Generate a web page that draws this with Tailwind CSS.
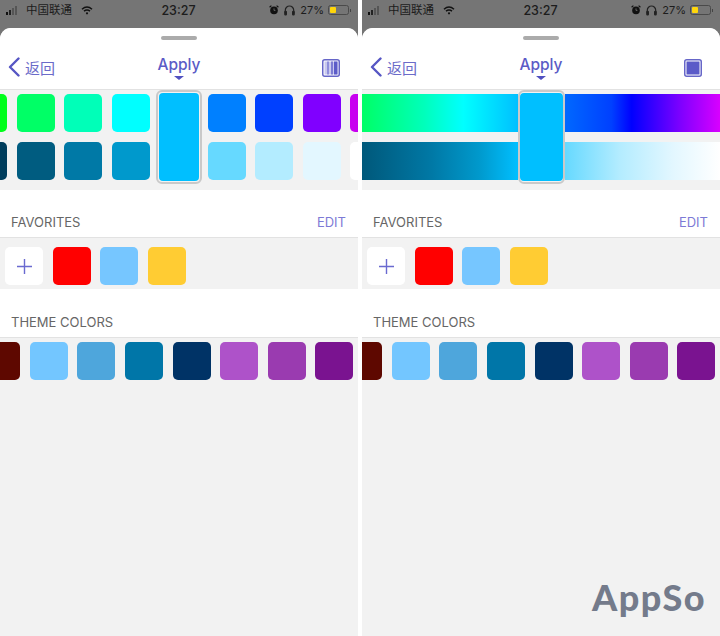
<!DOCTYPE html>
<html><head><meta charset="utf-8"><script src="https://cdn.jsdelivr.net/npm/@tailwindcss/browser@4"></script></head>
<body class="m-0">
<div class="relative flex justify-between w-[720px] h-[636px] overflow-hidden bg-white font-['Inter','Noto_Sans_CJK_SC',sans-serif]">

<!-- LEFT -->
<section class="w-[358px] h-full flex flex-col bg-[#757575] overflow-hidden">
  <div class="h-[28px] shrink-0 flex items-center pl-[6px] pr-[7px] pb-[8px] text-[#1c1c1c]">
    <div class="flex-1 flex items-center">
      <div class="flex items-end gap-[1px] w-[15px] h-[9px]"><i class="block w-[2px] h-[3px] bg-[#111]"></i><i class="block w-[2px] h-[5px] bg-[#222]"></i><i class="block w-[2px] h-[7px] bg-[#555]"></i><i class="block w-[2px] h-[9px] bg-[#555]"></i></div>
      <span class="ml-[5px] text-[11.5px] leading-none font-['Noto_Sans_CJK_SC',sans-serif]">中国联通</span>
      <svg class="ml-[9px]" width="12" height="9" viewBox="0 0 12 9" fill="none" stroke="#111"><path d="M1 3.2C4 .6 8 .6 11 3.2" stroke-width="1.5"/><path d="M3 5.2c1.8-1.5 4.2-1.5 6 0" stroke-width="1.5"/><circle cx="6" cy="7.3" r="1.1" fill="#111" stroke="none"/></svg>
    </div>
    <span class="relative top-[1px] text-[12.5px] font-medium leading-none">23:27</span>
    <div class="flex-1 flex items-center justify-end">
      <svg width="10" height="10" viewBox="0 0 10 10"><circle cx="5" cy="5.4" r="3.8" fill="#111"/><path d="M.6 2.2 2.4.6M9.4 2.2 7.6.6" stroke="#111" stroke-width="1.2"/><path d="M5 3.4v2h1.4" stroke="#777" stroke-width=".8" fill="none"/></svg>
      <svg class="ml-[5px]" width="11" height="11" viewBox="0 0 11 11" fill="none" stroke="#222" stroke-width="1.2"><path d="M1.3 8V5.2a4.2 4.2 0 0 1 8.4 0V8"/><rect x=".8" y="6.4" width="1.6" height="3.4" rx=".6" fill="#222"/><rect x="8.6" y="6.4" width="1.6" height="3.4" rx=".6" fill="#222"/></svg>
      <span class="ml-[5px] text-[11px] leading-none">27%</span>
      <div class="ml-[4px] flex items-center">
        <div class="w-[21px] h-[10px] rounded-[2.5px] border border-[#4a4a4a] p-[1px]"><div class="w-[6px] h-full bg-[#ffd60a] rounded-[1px]"></div></div>
        <i class="block w-[1px] h-[3px] bg-[#444] ml-[1px]"></i>
      </div>
    </div>
  </div>

  <div class="flex-1 flex flex-col bg-[#f2f2f2] rounded-t-[11px] overflow-hidden">
    <div class="h-[62px] shrink-0 bg-white border-b border-[#e2e2e2] flex flex-col">
      <div class="w-[36px] h-[4px] mt-[8px] rounded-full bg-[#ababab] mx-auto"></div>
      <div class="grid grid-cols-[1fr_auto_1fr] items-start px-[8px] mt-[15px]">
        <div class="flex items-center h-[24px]">
          <svg width="12" height="20" viewBox="0 0 12 20" fill="none" stroke="#5656c4" stroke-width="2.4" stroke-linecap="round" stroke-linejoin="round"><path d="M10.5 1.5 2 10l8.5 8.5"/></svg>
          <span class="ml-[5px] text-[15px] leading-none font-['Noto_Sans_CJK_SC',sans-serif] text-[#6b6bc9]">返回</span>
        </div>
        <div class="flex flex-col items-center">
          <span class="text-[15.5px] leading-[20px] font-medium text-[#5b5bc6]">Apply</span>
          <i class="block mt-[1px] w-0 h-0 border-x-[5px] border-x-transparent border-t-[4px] border-t-[#5050c0]"></i>
        </div>
        <div class="flex justify-end pr-[10px] mt-[4px]">
          <svg width="18" height="18" viewBox="0 0 18 18"><rect x=".75" y=".75" width="16.5" height="16.5" rx="2" fill="#fff" stroke="#6666c8" stroke-width="1.5"/><rect x="2.5" y="2.5" width="13" height="13" fill="#c9c9ee"/><rect x="5" y="2.5" width="2" height="13" fill="#8f8fdc"/><rect x="9" y="2.5" width="2" height="13" fill="#7c7cd4"/><rect x="12" y="2.5" width="3.5" height="13" fill="#5c5cc8"/></svg>
        </div>
      </div>
    </div>

    <div class="h-[100px] shrink-0 pt-[4px] overflow-hidden">
      <div class="grid grid-rows-[38px_38px] grid-flow-col auto-cols-max gap-y-[10px] gap-x-[9.5px] ml-[-31px]">
        <div class="w-[38px] rounded-[5px] bg-[#00ff1a]"></div><div class="w-[38px] rounded-[5px] bg-[#003d5c]"></div>
        <div class="w-[38px] rounded-[5px] bg-[#00ff66]"></div><div class="w-[38px] rounded-[5px] bg-[#005c80]"></div>
        <div class="w-[38px] rounded-[5px] bg-[#00ffb8]"></div><div class="w-[38px] rounded-[5px] bg-[#0079a6]"></div>
        <div class="w-[38px] rounded-[5px] bg-[#00ffff]"></div><div class="w-[38px] rounded-[5px] bg-[#0099cc]"></div>
        <div class="relative row-span-2 w-[40px] mr-[-1px] my-[-1px] rounded-[4px] bg-[#00bfff] after:content-[''] after:absolute after:inset-[-3px] after:rounded-[6px] after:border-2 after:border-[#c9c9c9]"></div>
        <div class="w-[38px] rounded-[5px] bg-[#0080ff]"></div><div class="w-[38px] rounded-[5px] bg-[#66d9ff]"></div>
        <div class="w-[38px] rounded-[5px] bg-[#0040ff]"></div><div class="w-[38px] rounded-[5px] bg-[#b3ecff]"></div>
        <div class="w-[38px] rounded-[5px] bg-[#8000ff]"></div><div class="w-[38px] rounded-[5px] bg-[#e3f7ff]"></div>
        <div class="w-[38px] rounded-[5px] bg-[#c800f0]"></div><div class="w-[38px] rounded-[5px] bg-white"></div>
      </div>
    </div>

    <div class="h-[48px] shrink-0 bg-white border-b border-[#e2e2e2] flex items-end justify-between pl-[11px] pr-[12px] pb-[6px] text-[13px] leading-[18px]">
      <span class="text-[#666]">FAVORITES</span><span class="text-[#7d7ad6]">EDIT</span>
    </div>
    <div class="h-[51px] shrink-0 pt-[9px] pl-[5px] flex gap-[9.6px]">
      <div class="w-[38px] h-[38px] rounded-[5px] bg-white flex items-center justify-center"><svg width="15" height="15" viewBox="0 0 15 15" stroke="#6a6ad0" stroke-width="1.4"><path d="M7.5 0v15M0 7.5h15"/></svg></div>
      <div class="w-[38px] h-[38px] rounded-[5px] bg-[#ff0000]"></div>
      <div class="w-[38px] h-[38px] rounded-[5px] bg-[#76c6ff]"></div>
      <div class="w-[38px] h-[38px] rounded-[5px] bg-[#ffcc33]"></div>
    </div>
    <div class="h-[49px] shrink-0 bg-white border-b border-[#e2e2e2] flex items-end pl-[11px] pb-[6px] text-[13px] leading-[18px] text-[#666]">THEME COLORS</div>
    <div class="pt-[4px] pl-[5px] ml-[-23px] flex gap-[9.65px] overflow-hidden">
      <div class="w-[38px] h-[38px] shrink-0 rounded-[5px] bg-[#5e0800]"></div>
      <div class="w-[38px] h-[38px] shrink-0 rounded-[5px] bg-[#73c6ff]"></div>
      <div class="w-[38px] h-[38px] shrink-0 rounded-[5px] bg-[#4ea6dc]"></div>
      <div class="w-[38px] h-[38px] shrink-0 rounded-[5px] bg-[#0076a8]"></div>
      <div class="w-[38px] h-[38px] shrink-0 rounded-[5px] bg-[#003366]"></div>
      <div class="w-[38px] h-[38px] shrink-0 rounded-[5px] bg-[#ae52c9]"></div>
      <div class="w-[38px] h-[38px] shrink-0 rounded-[5px] bg-[#9a3bb0]"></div>
      <div class="w-[38px] h-[38px] shrink-0 rounded-[5px] bg-[#7a1390]"></div>
    </div>
  </div>
</section>

<!-- RIGHT -->
<section class="w-[358px] h-full flex flex-col bg-[#757575] overflow-hidden">
  <div class="h-[28px] shrink-0 flex items-center pl-[6px] pr-[7px] pb-[8px] text-[#1c1c1c]">
    <div class="flex-1 flex items-center">
      <div class="flex items-end gap-[1px] w-[15px] h-[9px]"><i class="block w-[2px] h-[3px] bg-[#111]"></i><i class="block w-[2px] h-[5px] bg-[#222]"></i><i class="block w-[2px] h-[7px] bg-[#555]"></i><i class="block w-[2px] h-[9px] bg-[#555]"></i></div>
      <span class="ml-[5px] text-[11.5px] leading-none font-['Noto_Sans_CJK_SC',sans-serif]">中国联通</span>
      <svg class="ml-[9px]" width="12" height="9" viewBox="0 0 12 9" fill="none" stroke="#111"><path d="M1 3.2C4 .6 8 .6 11 3.2" stroke-width="1.5"/><path d="M3 5.2c1.8-1.5 4.2-1.5 6 0" stroke-width="1.5"/><circle cx="6" cy="7.3" r="1.1" fill="#111" stroke="none"/></svg>
    </div>
    <span class="relative top-[1px] text-[12.5px] font-medium leading-none">23:27</span>
    <div class="flex-1 flex items-center justify-end">
      <svg width="10" height="10" viewBox="0 0 10 10"><circle cx="5" cy="5.4" r="3.8" fill="#111"/><path d="M.6 2.2 2.4.6M9.4 2.2 7.6.6" stroke="#111" stroke-width="1.2"/><path d="M5 3.4v2h1.4" stroke="#777" stroke-width=".8" fill="none"/></svg>
      <svg class="ml-[5px]" width="11" height="11" viewBox="0 0 11 11" fill="none" stroke="#222" stroke-width="1.2"><path d="M1.3 8V5.2a4.2 4.2 0 0 1 8.4 0V8"/><rect x=".8" y="6.4" width="1.6" height="3.4" rx=".6" fill="#222"/><rect x="8.6" y="6.4" width="1.6" height="3.4" rx=".6" fill="#222"/></svg>
      <span class="ml-[5px] text-[11px] leading-none">27%</span>
      <div class="ml-[4px] flex items-center">
        <div class="w-[21px] h-[10px] rounded-[2.5px] border border-[#4a4a4a] p-[1px]"><div class="w-[6px] h-full bg-[#ffd60a] rounded-[1px]"></div></div>
        <i class="block w-[1px] h-[3px] bg-[#444] ml-[1px]"></i>
      </div>
    </div>
  </div>

  <div class="flex-1 flex flex-col bg-[#f2f2f2] rounded-t-[11px] overflow-hidden">
    <div class="h-[62px] shrink-0 bg-white border-b border-[#e2e2e2] flex flex-col">
      <div class="w-[36px] h-[4px] mt-[8px] rounded-full bg-[#ababab] mx-auto"></div>
      <div class="grid grid-cols-[1fr_auto_1fr] items-start px-[8px] mt-[15px]">
        <div class="flex items-center h-[24px]">
          <svg width="12" height="20" viewBox="0 0 12 20" fill="none" stroke="#5656c4" stroke-width="2.4" stroke-linecap="round" stroke-linejoin="round"><path d="M10.5 1.5 2 10l8.5 8.5"/></svg>
          <span class="ml-[5px] text-[15px] leading-none font-['Noto_Sans_CJK_SC',sans-serif] text-[#6b6bc9]">返回</span>
        </div>
        <div class="flex flex-col items-center">
          <span class="text-[15.5px] leading-[20px] font-medium text-[#5b5bc6]">Apply</span>
          <i class="block mt-[1px] w-0 h-0 border-x-[5px] border-x-transparent border-t-[4px] border-t-[#5050c0]"></i>
        </div>
        <div class="flex justify-end pr-[10px] mt-[4px]">
          <svg width="18" height="18" viewBox="0 0 18 18"><rect x=".75" y=".75" width="16.5" height="16.5" rx="2" fill="#fff" stroke="#6666c8" stroke-width="1.5"/><rect x="2.5" y="2.5" width="13" height="13" fill="#5a5ac8"/></svg>
        </div>
      </div>
    </div>

    <div class="h-[100px] shrink-0 pt-[4px]">
      <div class="grid grid-cols-[1fr_43px_1fr] grid-rows-[38px_38px] gap-y-[10px]">
        <div class="mr-[2px] bg-[linear-gradient(90deg,#00ff66,#00ffbb_40%,#00ffff_65%,#00bfff)]"></div>
        <div class="relative row-span-2 my-[-1px] rounded-[4px] bg-[#00bfff] after:content-[''] after:absolute after:inset-[-3px_-2px] after:rounded-[6px] after:border-2 after:border-[#c9c9c9]"></div>
        <div class="ml-[2px] bg-[linear-gradient(90deg,#0068ff,#0040ff_30%,#0000ff_43%,#8000ff_75%,#d800ff)]"></div>
        <div class="mr-[2px] bg-[linear-gradient(90deg,#00587a,#0079a6_45%,#0099cc_75%,#00bfff)]"></div>
        <div class="ml-[2px] bg-[linear-gradient(90deg,#66d9ff,#b3ecff_35%,#e3f7ff_70%,#ffffff)]"></div>
      </div>
    </div>

    <div class="h-[48px] shrink-0 bg-white border-b border-[#e2e2e2] flex items-end justify-between pl-[11px] pr-[12px] pb-[6px] text-[13px] leading-[18px]">
      <span class="text-[#666]">FAVORITES</span><span class="text-[#7d7ad6]">EDIT</span>
    </div>
    <div class="h-[51px] shrink-0 pt-[9px] pl-[5px] flex gap-[9.6px]">
      <div class="w-[38px] h-[38px] rounded-[5px] bg-white flex items-center justify-center"><svg width="15" height="15" viewBox="0 0 15 15" stroke="#6a6ad0" stroke-width="1.4"><path d="M7.5 0v15M0 7.5h15"/></svg></div>
      <div class="w-[38px] h-[38px] rounded-[5px] bg-[#ff0000]"></div>
      <div class="w-[38px] h-[38px] rounded-[5px] bg-[#76c6ff]"></div>
      <div class="w-[38px] h-[38px] rounded-[5px] bg-[#ffcc33]"></div>
    </div>
    <div class="h-[49px] shrink-0 bg-white border-b border-[#e2e2e2] flex items-end pl-[11px] pb-[6px] text-[13px] leading-[18px] text-[#666]">THEME COLORS</div>
    <div class="pt-[4px] pl-[5px] ml-[-23px] flex gap-[9.65px] overflow-hidden">
      <div class="w-[38px] h-[38px] shrink-0 rounded-[5px] bg-[#5e0800]"></div>
      <div class="w-[38px] h-[38px] shrink-0 rounded-[5px] bg-[#73c6ff]"></div>
      <div class="w-[38px] h-[38px] shrink-0 rounded-[5px] bg-[#4ea6dc]"></div>
      <div class="w-[38px] h-[38px] shrink-0 rounded-[5px] bg-[#0076a8]"></div>
      <div class="w-[38px] h-[38px] shrink-0 rounded-[5px] bg-[#003366]"></div>
      <div class="w-[38px] h-[38px] shrink-0 rounded-[5px] bg-[#ae52c9]"></div>
      <div class="w-[38px] h-[38px] shrink-0 rounded-[5px] bg-[#9a3bb0]"></div>
      <div class="w-[38px] h-[38px] shrink-0 rounded-[5px] bg-[#7a1390]"></div>
    </div>
  </div>
</section>

<div class="absolute left-[592px] top-[574px] text-[36px] leading-[46px] font-black font-['Lato',sans-serif] text-[#747b8b] tracking-[1.5px]">AppSo</div>
</div>
</body></html>
